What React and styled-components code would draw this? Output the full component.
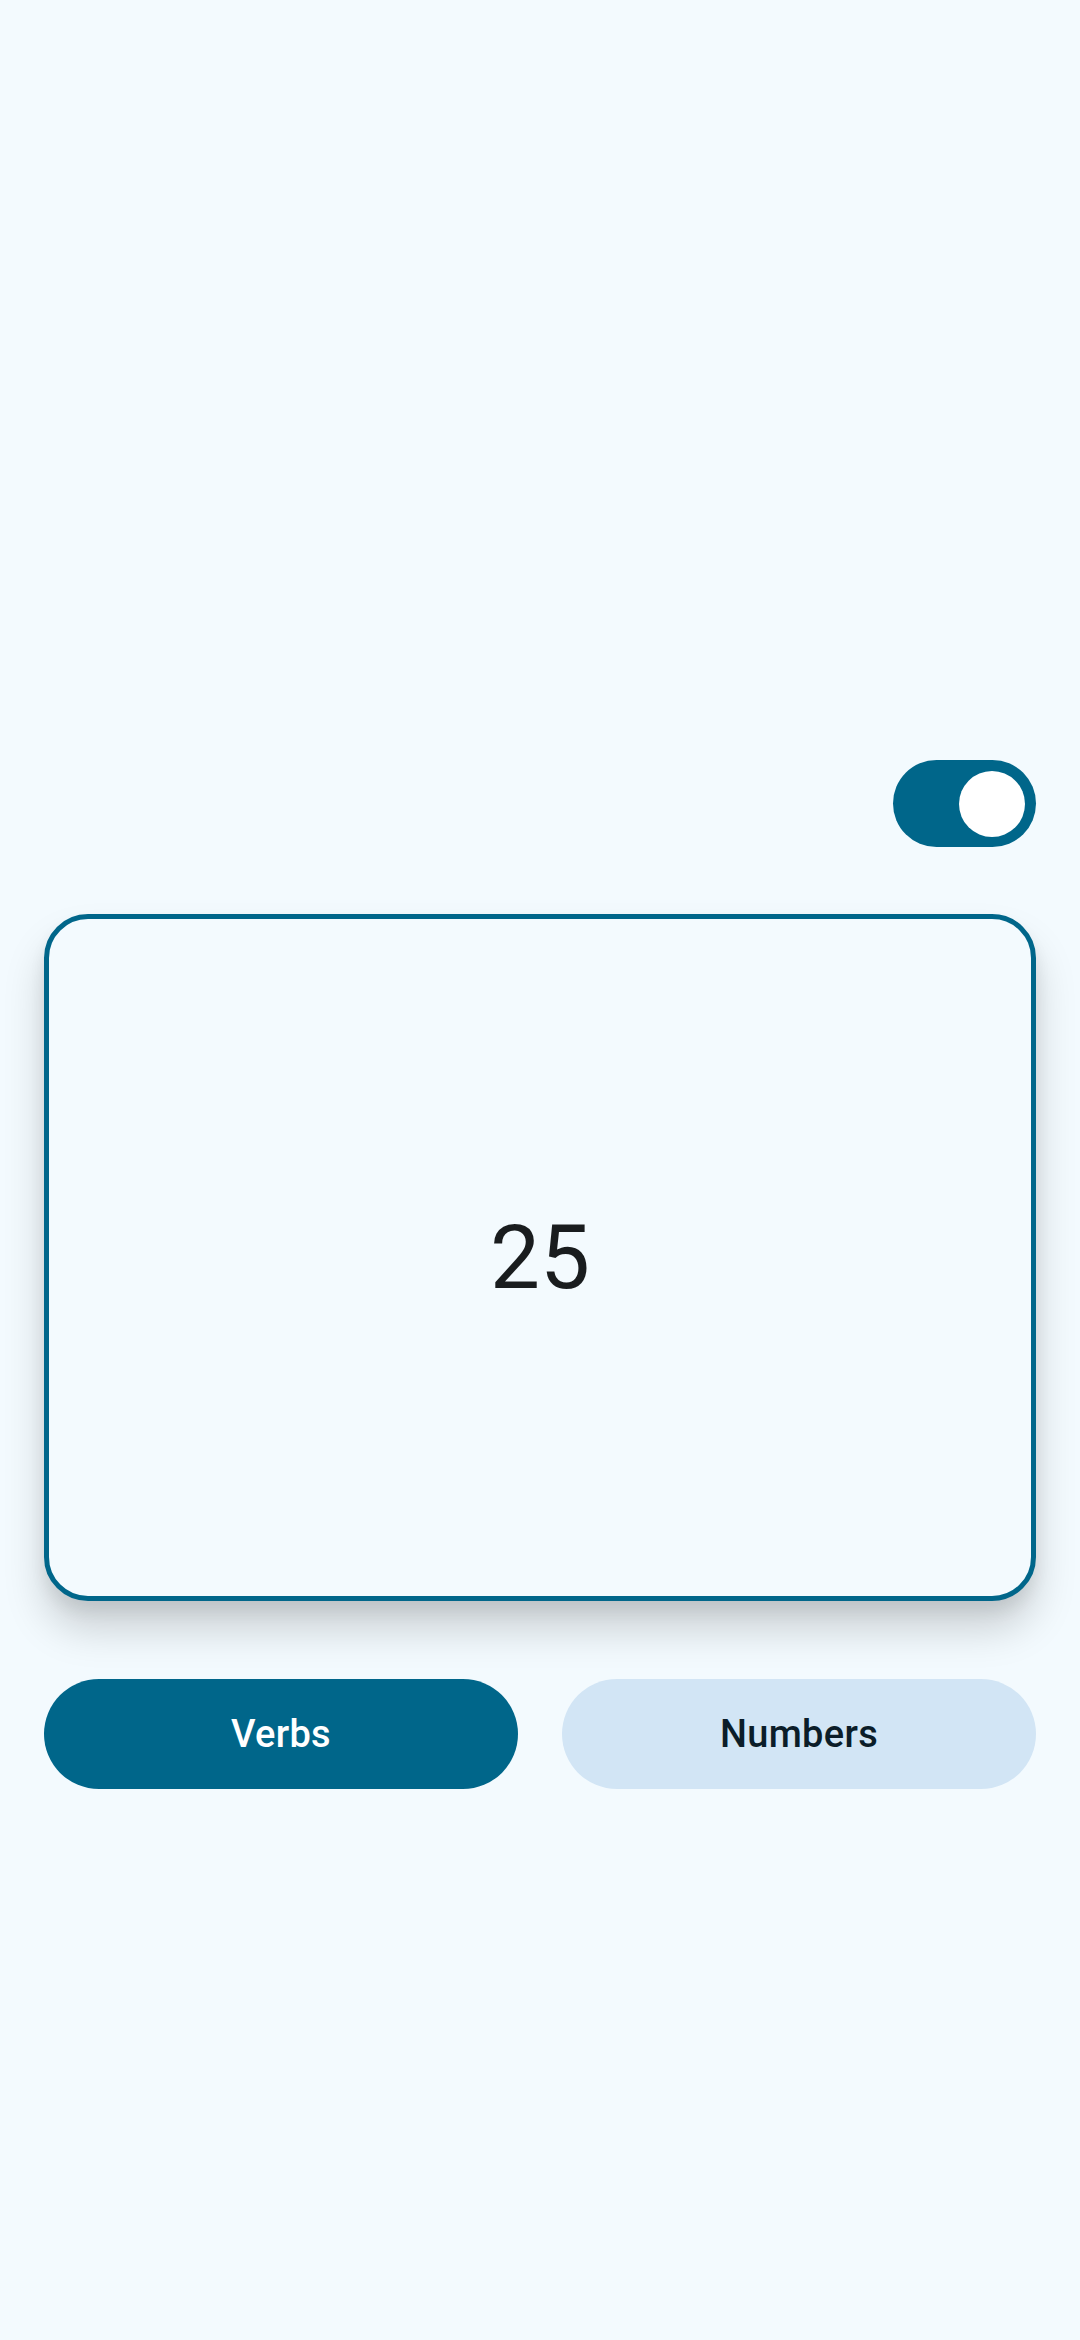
import React, { useState } from 'react';
import styled, { createGlobalStyle } from 'styled-components';

const GlobalStyle = createGlobalStyle`
   html, body {
      margin: 0;
      padding: 0;
      background: #f3fafe;
   }
   body {
      font-family: Roboto, "Noto Sans", sans-serif;
   }
`

const Screen = styled.main`
   min-height: 2340px;
   box-sizing: border-box;
   padding: 760px 44px 0;
   display: flex;
   flex-direction: column;
   background: #f3fafe;
`

const ToggleRow = styled.div`
   display: flex;
   justify-content: flex-end;
`

const SwitchTrack = styled.button`
   width: 143px;
   height: 87px;
   padding: 0 11px;
   border: none;
   border-radius: 44px;
   background: ${(p) => (p.$on ? '#00668a' : '#dee3ea')};
   display: flex;
   align-items: center;
   justify-content: ${(p) => (p.$on ? 'flex-end' : 'flex-start')};
   cursor: pointer;
   box-sizing: border-box;
`

const SwitchThumb = styled.span`
   width: 66px;
   height: 66px;
   border-radius: 50%;
   background: #ffffff;
   display: block;
`

const Card = styled.section`
   margin-top: 67px;
   height: 687px;
   box-sizing: border-box;
   border: 5.5px solid #00668a;
   border-radius: 44px;
   background: #f3fafe;
   box-shadow: 0 28px 40px rgba(0, 0, 0, 0.17), 0 10px 16px rgba(0, 0, 0, 0.07);
   display: flex;
   align-items: center;
   justify-content: center;
`

const CardText = styled.span`
   font-family: Roboto, sans-serif;
   font-size: 89px;
   font-weight: 400;
   color: #191c1e;
   line-height: 1;
`

const ButtonRow = styled.div`
   margin-top: 78px;
   display: grid;
   grid-template-columns: 1fr 1fr;
   gap: 44px;
`

const PillButton = styled.button`
   height: 110px;
   border: none;
   border-radius: 55px;
   background: ${(p) => (p.$active ? '#00668a' : '#d2e5f5')};
   color: ${(p) => (p.$active ? '#ffffff' : '#0b1d29')};
   font-family: Roboto, sans-serif;
   font-size: 38px;
   font-weight: 500;
   letter-spacing: 0.3px;
   cursor: pointer;
`

function App() {
   const [on, setOn] = useState(true);
   const [mode, setMode] = useState('verbs');

   return (
      <>
         <GlobalStyle />
         <Screen>
            <ToggleRow>
               <SwitchTrack $on={on} onClick={() => setOn(!on)} aria-label="toggle">
                  <SwitchThumb />
               </SwitchTrack>
            </ToggleRow>
            <Card>
               <CardText>25</CardText>
            </Card>
            <ButtonRow>
               <PillButton $active={mode === 'verbs'} onClick={() => setMode('verbs')}>
                  Verbs
               </PillButton>
               <PillButton $active={mode === 'numbers'} onClick={() => setMode('numbers')}>
                  Numbers
               </PillButton>
            </ButtonRow>
         </Screen>
      </>
   );
}

export default App;
